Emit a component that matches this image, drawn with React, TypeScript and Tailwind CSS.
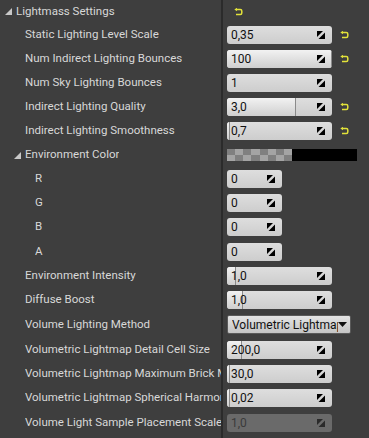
import React from "react";

const font = { fontFamily: "Roboto, 'Liberation Sans', sans-serif" };

function ResetIcon() {
  return (
    <svg width="9" height="8" viewBox="0 0 9 8" className="shrink-0">
      <path d="M2 1.5 H6.3 Q7.8 1.5 7.8 3 V4.9 Q7.8 6.4 6.3 6.4 H2" fill="none" stroke="#e2e23a" strokeWidth="1.5" />
      <path d="M0.3 1.5 L3 -0.2 V3.2 Z" fill="#e2e23a" />
    </svg>
  );
}

function SpinIcon({ dim }: { dim?: boolean }) {
  const c = dim ? "#2a2a2a" : "#000";
  return (
    <svg width="8" height="8" viewBox="0 0 8 8" className="shrink-0">
      <polygon points="0,0 6,0 0,6" fill={c} />
      <polygon points="8,1.5 8,8 1.5,8" fill={c} />
    </svg>
  );
}

function NumberField({
  value,
  width = "w-[105px]",
  fill,
  disabled,
}: {
  value: string;
  width?: string;
  fill?: number;
  disabled?: boolean;
}) {
  return (
    <div
      className={`relative h-[18px] ${width} rounded-[3px] overflow-hidden flex items-center pl-[4px] pr-[7px] ${
        disabled ? "bg-[#6a6a6a]" : "bg-gradient-to-b from-[#dedede] to-[#cdcdcd]"
      }`}
    >
      {fill !== undefined && (
        <div
          className="absolute left-0 top-0 bottom-0 bg-gradient-to-b from-[#f2f2f2] to-[#cfcfcf] border-r border-[#8a8a8a]"
          style={{ width: `${fill}%` }}
        />
      )}
      <span className={`relative flex-1 text-[12px] ${disabled ? "text-[#3a3a3a]" : "text-[#111]"}`}>{value}</span>
      <span className="relative">
        <SpinIcon dim={disabled} />
      </span>
    </div>
  );
}

type Row = {
  label: string;
  indent: number;
  arrow?: boolean;
  content?: React.ReactNode;
  reset?: boolean;
  h?: string;
};

function Triangle() {
  return (
    <svg width="7" height="7" viewBox="0 0 7 7" className="shrink-0">
      <polygon points="7,0 7,7 0,7" fill="#c8c8c8" />
    </svg>
  );
}

export default function App() {
  const rows: Row[] = [
    { label: "Static Lighting Level Scale", indent: 25, content: <NumberField value="0,35" />, reset: true },
    { label: "Num Indirect Lighting Bounces", indent: 25, content: <NumberField value="100" fill={100} />, reset: true },
    { label: "Num Sky Lighting Bounces", indent: 25, content: <NumberField value="1" /> },
    { label: "Indirect Lighting Quality", indent: 25, content: <NumberField value="3,0" fill={66} />, reset: true },
    { label: "Indirect Lighting Smoothness", indent: 25, content: <NumberField value="0,7" fill={3} />, reset: true },
    {
      label: "Environment Color",
      indent: 14,
      arrow: true,
      content: (
        <div className="flex h-[12px] w-[130px]">
          <div className="w-[65px] h-full grid grid-cols-8 grid-rows-2">
            {Array.from({ length: 16 }).map((_, i) => (
              <div
                key={i}
                className={(Math.floor(i / 8) + (i % 8)) % 2 === 0 ? "bg-[#808080]" : "bg-[#a4a4a4]"}
              />
            ))}
          </div>
          <div className="flex-1 bg-black" />
        </div>
      ),
    },
    { label: "R", indent: 35, content: <NumberField value="0" width="w-[55px]" /> },
    { label: "G", indent: 35, content: <NumberField value="0" width="w-[55px]" /> },
    { label: "B", indent: 35, content: <NumberField value="0" width="w-[55px]" /> },
    { label: "A", indent: 35, h: "h-[25px]", content: <NumberField value="0" width="w-[55px]" /> },
    { label: "Environment Intensity", indent: 25, content: <NumberField value="1,0" fill={9} /> },
    { label: "Diffuse Boost", indent: 25, content: <NumberField value="1,0" fill={15} /> },
    {
      label: "Volume Lighting Method",
      indent: 25,
      h: "h-[25px]",
      content: (
        <div className="h-[19px] w-[124px] rounded-[2px] border border-[#5a5a5a] bg-gradient-to-b from-[#e4e4e4] to-[#c4c4c4] flex items-center pl-[4px] pr-[3px] overflow-hidden">
          <span className="flex-1 min-w-0 overflow-hidden whitespace-nowrap text-[12px] text-[#111]">Volumetric Lightmap</span>
          <svg width="9" height="5" viewBox="0 0 9 5" className="shrink-0">
            <polygon points="0,0 9,0 4.5,5" fill="#111" />
          </svg>
        </div>
      ),
    },
    { label: "Volumetric Lightmap Detail Cell Size", indent: 25, h: "h-[25px]", content: <NumberField value="200,0" fill={14} /> },
    { label: "Volumetric Lightmap Maximum Brick Memory", indent: 25, content: <NumberField value="30,0" fill={3} /> },
    { label: "Volumetric Lightmap Spherical Harmonic Smoothing", indent: 25, content: <NumberField value="0,02" fill={3} /> },
    { label: "Volume Light Sample Placement Scale", indent: 25, h: "h-[25px]", content: <NumberField value="1,0" disabled /> },
  ];

  return (
    <div className="w-[369px] h-[438px] bg-[#3e3e3e] overflow-hidden text-[#d8d8d8] text-[11.5px]" style={font}>
      <div className="flex h-[23px] items-center">
        <div className="w-[223px] flex items-center pl-[5px] gap-[4px] border-r-2 border-[#2b2b2b] h-full">
          <Triangle />
          <span>Lightmass Settings</span>
        </div>
        <div className="pl-[11px]">
          <ResetIcon />
        </div>
      </div>
      {rows.map((r) => (
        <div key={r.label} className={`flex ${r.h ?? "h-[24px]"} items-center`}>
          <div
            className="w-[223px] h-full flex items-center gap-[4px] border-r-2 border-[#2b2b2b] overflow-hidden whitespace-nowrap"
            style={{ paddingLeft: r.indent }}
          >
            {r.arrow && <Triangle />}
            <span className="min-w-0 overflow-hidden">{r.label}</span>
          </div>
          <div className="flex items-center pl-[4px] gap-[8px]">
            {r.content}
            {r.reset && <ResetIcon />}
          </div>
        </div>
      ))}
      <div className="flex h-full">
        <div className="w-[223px] border-r-2 border-[#2b2b2b]" />
      </div>
    </div>
  );
}
